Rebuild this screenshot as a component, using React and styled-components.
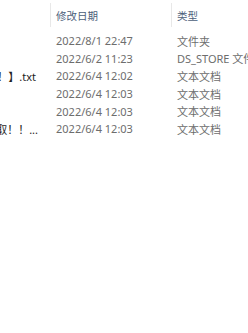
import styled, { createGlobalStyle } from "styled-components"

const files = [
    { name: '', date: '2022/8/1 22:47', type: '文件夹' },
    { name: '', date: '2022/6/2 11:23', type: 'DS_STORE 文件' },
    { name: '标题！】.txt', date: '2022/6/4 12:02', type: '文本文档', pad: '14px' },
    { name: '', date: '2022/6/4 12:03', type: '文本文档' },
    { name: '', date: '2022/6/4 12:03', type: '文本文档' },
    { name: '领取！！...', date: '2022/6/4 12:03', type: '文本文档', pad: '12px' },
]

const Global = createGlobalStyle`
    html, body {
        margin: 0;
        background: #FFFFFF;
    }
    body {
        font-family: 'Noto Sans', 'Noto Sans CJK SC', sans-serif;
        font-size: 11px;
        overflow: hidden;
    }
`

export default function App(){
    return(
        <>
            <Global />
            <Table>
                <Header>
                    <HeadCell />
                    <HeadCell separated>修改日期</HeadCell>
                    <HeadCell separated>类型</HeadCell>
                </Header>
                {files.map((f, i) => (
                    <Row key={i}>
                        <Name pad={f.pad}>{f.name}</Name>
                        <Cell>{f.date}</Cell>
                        <Cell>{f.type}</Cell>
                    </Row>
                ))}
            </Table>
        </>
    )
}

const Table = styled.div`
    width: 248px;
    height: 333px;
    overflow: hidden;
`
const Header = styled.div`
    display: grid;
    grid-template-columns: 50px 121px 1fr;
    height: 24px;
    margin-top: 3px;
    margin-bottom: 5px;
`
const HeadCell = styled.div`
    display: flex;
    align-items: center;
    padding-left: 5px;
    color: #4c607a;
    font-size: 10.5px;
    border-left: ${props => props.separated ? '1px solid #e8e8e8' : 'none'};
    white-space: nowrap;
    overflow: hidden;
`
const Row = styled.div`
    display: grid;
    grid-template-columns: 50px 121px 1fr;
    height: 17.6px;
    align-items: center;
`
const Cell = styled.div`
    padding-left: 6px;
    color: #6d6d6d;
    white-space: nowrap;
    overflow: hidden;
`
const Name = styled.div`
    display: flex;
    justify-content: flex-end;
    padding-right: ${props => props.pad || '12px'};
    color: #1e1e1e;
    white-space: nowrap;
    overflow: hidden;
`
